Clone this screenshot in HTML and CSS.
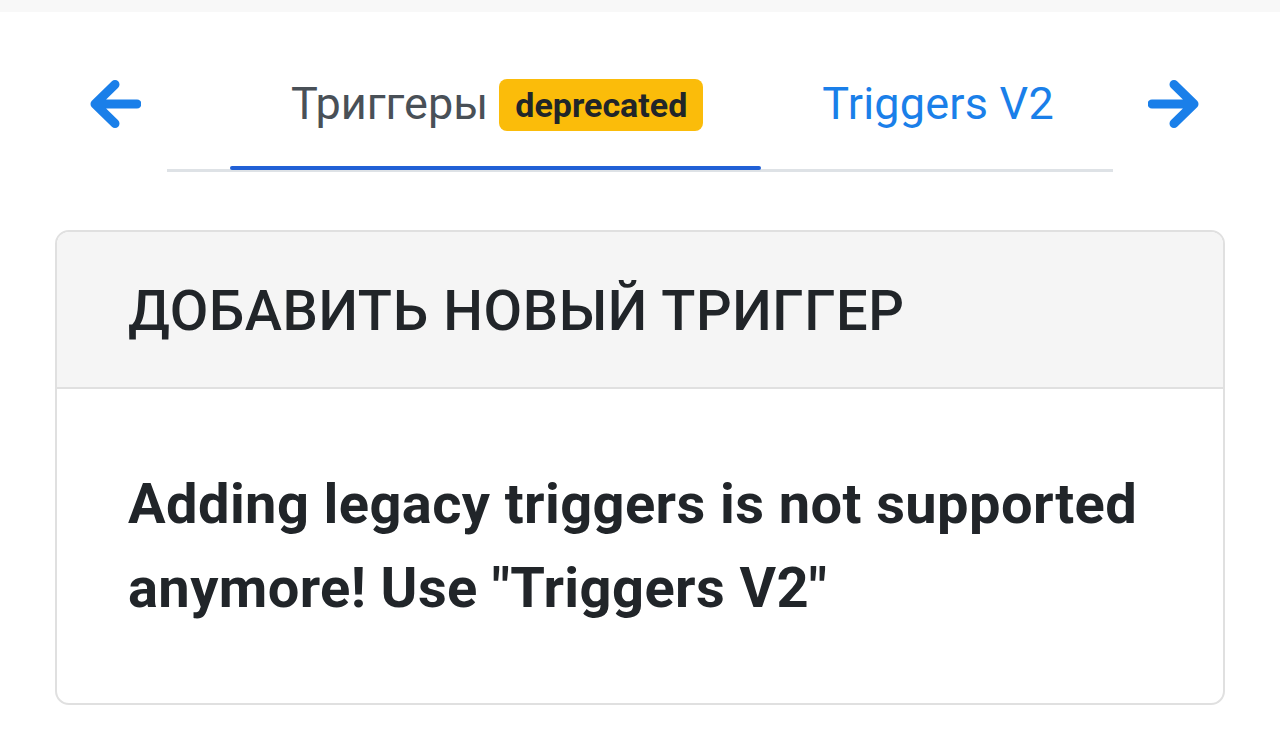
FILE: index.html
```html
<!DOCTYPE html>
<html lang="ru">
<head>
<meta charset="utf-8">
<title>Триггеры</title>
<link rel="stylesheet" href="styles.css">
</head>
<body>
<div class="topstrip"></div>
<nav class="tabbar">
  <a class="arrow arrow-left" href="#" aria-label="back">
    <svg width="52" height="48" viewBox="0 0 52 48"><path d="M48 24H6M26 4.5L6 24l20 19.5" fill="none" stroke="currentColor" stroke-width="9" stroke-linecap="round" stroke-linejoin="round"/></svg>
  </a>
  <ul class="tabs">
    <li class="tab active">Триггеры <span class="badge">deprecated</span></li>
    <li class="tab"><a href="#" class="tab-link">Triggers V2</a></li>
  </ul>
  <a class="arrow arrow-right" href="#" aria-label="forward">
    <svg width="52" height="48" viewBox="0 0 52 48"><path d="M4 24H46M26 4.5L46 24l-20 19.5" fill="none" stroke="currentColor" stroke-width="9" stroke-linecap="round" stroke-linejoin="round"/></svg>
  </a>
</nav>
<section class="card">
  <header class="card-header">ДОБАВИТЬ НОВЫЙ ТРИГГЕР</header>
  <div class="card-body">Adding legacy triggers is not supported anymore! Use "Triggers V2"</div>
</section>
</body>
</html>
```

FILE: styles.css
```css
html, body {
  margin: 0;
  padding: 0;
  background: #ffffff;
}
body {
  font-family: Roboto, "Noto Sans", "Liberation Sans", sans-serif;
  color: #212529;
}
.topstrip {
  height: 12px;
  background: #f8f8f8;
}
.tabbar {
  display: flex;
  align-items: flex-start;
  padding: 40px 0 0 89px;
}
.arrow {
  display: block;
  color: #1a7fe9;
  margin-top: 28px;
  line-height: 0;
}
.arrow-left {
  margin-right: 26px;
}
.arrow-right {
  margin-left: 35px;
}
.tabs {
  list-style: none;
  margin: 0;
  padding: 0 0 0 63px;
  width: 883px;
  display: flex;
  border-bottom: 3px solid #dee2e6;
}
.tab {
  position: relative;
  padding: 17px 58px 31px 61px;
  font-size: 45px;
  line-height: 69px;
  white-space: nowrap;
  color: #495057;
}
.tab.active::after {
  content: "";
  position: absolute;
  left: 0;
  right: 0;
  bottom: -1px;
  height: 4px;
  border-radius: 2px;
  background: #2160d6;
}
.tab-link {
  color: #1a7fe9;
  text-decoration: none;
  letter-spacing: 0.2px;
}
.badge {
  display: inline-block;
  font-size: 34px;
  font-weight: 700;
  line-height: 1;
  padding: 9px 16px;
  border-radius: 8px;
  background: #fbbc0a;
  color: #212529;
  vertical-align: 2px;
}
.card {
  margin: 58px 55px 0 55px;
  border: 2px solid #e0e0e0;
  border-radius: 14px;
  overflow: hidden;
}
.card-header {
  background: #f5f5f5;
  border-bottom: 2px solid #e0e0e0;
  padding: 46px 71px 42px 71px;
  font-size: 56px;
  font-weight: 500;
  line-height: 67px;
  letter-spacing: 0.6px;
  color: #212529;
}
.card-body {
  padding: 73px 60px 73px 71px;
  font-size: 56px;
  font-weight: 700;
  line-height: 84px;
  letter-spacing: 0.4px;
  color: #212529;
}
```
